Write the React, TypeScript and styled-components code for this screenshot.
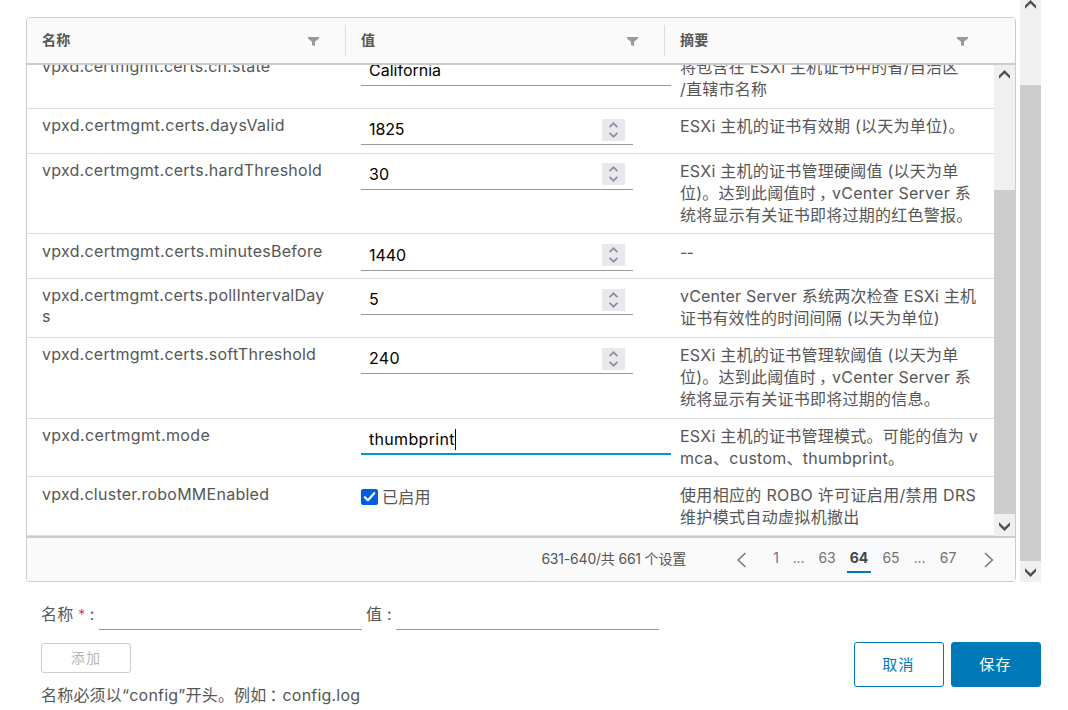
import React from "react";
import styled, { createGlobalStyle, css } from "styled-components";

const GlobalStyle = createGlobalStyle`
  * { box-sizing: border-box; }
  body {
    margin: 0;
    background: #fff;
    color: #565656;
    font-family: Inter, "Noto Sans CJK SC", sans-serif;
    font-size: 16px;
    letter-spacing: 0.25px;
    overflow: hidden;
  }
`;

const Page = styled.main`
  width: 1068px;
  height: 710px;
  display: flex;
  flex-direction: column;
`;

const ScrollArea = styled.section`
  display: flex;
  height: 582px;
  padding-left: 26px;
`;

const Grid = styled.div`
  width: 990px;
  height: 565px;
  margin-top: 17px;
  margin-right: 4px;
  border: 1px solid #ccc;
  border-radius: 4px;
  display: flex;
  flex-direction: column;
  overflow: hidden;
`;

const HeaderRow = styled.div`
  display: flex;
  align-items: center;
  height: 47px;
  flex: none;
  background: #fafafa;
  border-bottom: 2px solid #ccc;
`;

const HeaderCell = styled.div<{ $last?: boolean }>`
  display: flex;
  align-items: center;
  justify-content: space-between;
  height: 31px;
  width: ${(p) => (p.$last ? "349px" : "319px")};
  padding: 1px ${(p) => (p.$last ? "46px" : "26px")} 0 15px;
  border-right: ${(p) => (p.$last ? "none" : "1px solid #ddd")};
  font-size: 14px;
  font-weight: 600;
  line-height: 20px;

  span { margin-top: -2px; }
`;

const Body = styled.div`
  display: flex;
  height: 471px;
  flex: none;
`;

const Rows = styled.div`
  width: 967px;
  overflow: hidden;
  display: flex;
  flex-direction: column;

  > :first-child { margin-top: -15px; }
`;

const Row = styled.div<{ $height: number; $shift?: number }>`
  display: flex;
  flex: none;
  height: ${(p) => p.$height}px;
  padding-top: ${(p) => p.$shift ?? 0}px;
  border-bottom: 1px solid #ddd;
`;

const NameCell = styled.div<{ $spacing?: number }>`
  width: 319px;
  padding: 6px 10px 0 15px;
  line-height: 21px;
  white-space: nowrap;
  letter-spacing: ${(p) => p.$spacing ?? 0.25}px;
`;

const ValueCell = styled.div`
  width: 319px;
  padding: 7px 0 0 15px;
`;

const SummaryCell = styled.div<{ $spacing?: number }>`
  width: 329px;
  padding: 6px 0 0 15px;
  line-height: 22px;
  white-space: nowrap;
  letter-spacing: ${(p) => p.$spacing ?? 0.25}px;
`;

const Field = styled.div<{ $numeric?: boolean; $focused?: boolean; $spacing?: number }>`
  display: flex;
  align-items: center;
  justify-content: space-between;
  width: ${(p) => (p.$numeric ? 272 : 310)}px;
  height: 29px;
  padding: 0 8px 2px;
  color: #000;
  letter-spacing: ${(p) => p.$spacing ?? 0}px;
  border-bottom: 1px solid #999;
  ${(p) => p.$focused && css`border-bottom: 2px solid #0095d3;`}
`;

const Typed = styled.span`
  display: flex;
  align-items: center;
  height: 24px;
`;

const Caret = styled.i`
  width: 1px;
  height: 21px;
  margin-top: 1px;
  background: #000;
`;

const SpinBox = styled.span<{ $raised?: boolean }>`
  display: flex;
  width: 23px;
  height: 22px;
  margin-top: ${(p) => (p.$raised ? 0 : 2)}px;
  background: #e9e9ed;
`;

const CheckLabel = styled.div`
  display: flex;
  align-items: center;
  gap: 4px;
  height: 23px;
`;

const CheckMark = styled.span`
  display: flex;
  width: 17px;
  height: 16px;
  border-radius: 2px;
  background: #0060df;
`;

const CheckText = styled.span`
  margin-top: -2px;
`;

const Track = styled.div`
  display: flex;
  flex-direction: column;
  flex: none;
  width: 21px;
  height: 100%;
  background: #f0f0f0;
`;

const TrackEnd = styled.span<{ $height: number; $arrowTop: number }>`
  display: flex;
  justify-content: center;
  align-items: flex-start;
  height: ${(p) => p.$height}px;
  padding-top: ${(p) => p.$arrowTop}px;
`;

const Thumb = styled.span`
  flex: 1;
  background: #cdcdcd;
`;

const Footer = styled.footer`
  display: flex;
  align-items: center;
  justify-content: flex-end;
  flex: 1;
  padding-right: 18px;
  background: #fafafa;
  border-top: 2px solid #ccc;
  font-size: 14px;
  letter-spacing: -0.15px;
`;

const Total = styled.span`
  margin-right: 48px;
  margin-top: -3px;
  letter-spacing: -0.2px;
`;

const Pager = styled.nav`
  display: flex;
  align-items: center;
`;

const PageItem = styled.span<{ $width?: number; $active?: boolean }>`
  display: flex;
  justify-content: center;
  width: ${(p) => p.$width ?? 24}px;
  height: 28px;
  margin: -1px ${(p) => (p.$width ? 0 : 4)}px 0;
  line-height: 26px;
  color: #737373;
  ${(p) =>
    p.$active &&
    css`
      color: #454545;
      font-weight: 700;
      border-bottom: 2px solid #0079b8;
    `}
`;

const PagerArrow = styled.svg<{ $next?: boolean }>`
  width: 16px;
  height: 16px;
  margin: ${(p) => (p.$next ? "0 0 0 17px" : "0 16px 0 0")};
`;

const Bottom = styled.section`
  display: flex;
  justify-content: space-between;
  padding: 18px 27px 0 41px;
`;

const AddForm = styled.div`
  display: flex;
  flex-direction: column;
  align-items: flex-start;
`;

const FormLine = styled.div`
  display: flex;
  align-items: center;
  height: 30px;
`;

const FormLabel = styled.label<{ $width: number }>`
  width: ${(p) => p.$width}px;
  margin-top: -5px;
  white-space: pre;
`;

const Required = styled.span`
  color: #e0452c;
  font-size: 14px;
  letter-spacing: -0.4px;
`;

const Blank = styled.span`
  width: 263px;
  height: 30px;
  margin-right: 4px;
  border-bottom: 1px solid #999;
`;

const Button = styled.button<{ $kind: "add" | "cancel" | "save" }>`
  width: 90px;
  height: 45px;
  padding: 0 1px 2px 0;
  border: 1px solid #0079b8;
  border-radius: 3px;
  background: #fff;
  color: #0079b8;
  font-family: inherit;
  font-size: 15px;
  letter-spacing: 1.2px;
  ${(p) => p.$kind === "save" && css`background: #0079b8; color: #fff;`}
  ${(p) =>
    p.$kind === "add" &&
    css`
      height: 30px;
      margin-top: 13px;
      padding-right: 0;
      border-color: #ccc;
      color: #b5b5b5;
      font-size: 14px;
    `}
`;

const Hint = styled.p`
  margin: 11px 0 0;
  line-height: 22px;
  white-space: nowrap;
  letter-spacing: 0.2px;
`;

const Actions = styled.div`
  display: flex;
  gap: 7px;
  padding-top: 42px;
`;

const MidPunct = styled.span`
  margin: 0 5px 0 3px;
  font-feature-settings: "halt";
  letter-spacing: 0;
`;

const Filter = () => (
  <svg width="11" height="9" viewBox="0 0 11 9">
    <path d="M0 0H11V1.4L7 4.8V9L4 8.2V4.8L0 1.4Z" fill="#999" />
  </svg>
);

const Spinner = ({ raised }: { raised?: boolean }) => (
  <SpinBox $raised={raised}>
    <svg width="23" height="22" viewBox="0 0 23 22" fill="none" stroke="#8f8f9d" strokeWidth="1.8">
      <path d="M7.5 8.2L11.5 4.3L15.5 8.2M7.5 13.8L11.5 17.7L15.5 13.8" />
    </svg>
  </SpinBox>
);

const Arrow = ({ down }: { down?: boolean }) => (
  <svg width="11" height="9" viewBox="0 0 11 9">
    <path
      d={down ? "M5.5 9L0 3.5V0.2L5.5 5.4L11 0.2V3.5Z" : "M5.5 0L0 5.5V8.8L5.5 3.6L11 8.8V5.5Z"}
      fill="#505050"
    />
  </svg>
);

type Setting = {
  name: string[];
  nameSpacing?: number;
  height: number;
  shift?: number;
  value: React.ReactNode;
  summary: React.ReactNode[];
  summarySpacing?: number;
};

const numberField = (value: string, spacing = 0, raised = false) => (
  <Field $numeric $spacing={spacing}>
    {value}
    <Spinner raised={raised} />
  </Field>
);

const settings: Setting[] = [
  {
    name: ["vpxd.certmgmt.certs.cn.state"],
    nameSpacing: 0.22,
    height: 59,
    value: <Field>California</Field>,
    summary: ["将包含在 ESXi 主机证书中的省/自治区", "/直辖市名称"],
  },
  {
    name: ["vpxd.certmgmt.certs.daysValid"],
    nameSpacing: 0.31,
    height: 45,
    value: numberField("1825", -0.1),
    summary: ["ESXi 主机的证书有效期 (以天为单位)。"],
  },
  {
    name: ["vpxd.certmgmt.certs.hardThreshold"],
    height: 80,
    value: numberField("30", 0.2, true),
    summary: [
      "ESXi 主机的证书管理硬阈值 (以天为单",
      <>位)。达到此阈值时<MidPunct>，</MidPunct>vCenter Server 系</>,
      "统将显示有关证书即将过期的红色警报。",
    ],
  },
  {
    name: ["vpxd.certmgmt.certs.minutesBefore"],
    nameSpacing: 0.28,
    height: 45,
    shift: 1,
    value: numberField("1440", -0.05, true),
    summary: ["--"],
    summarySpacing: -0.9,
  },
  {
    name: ["vpxd.certmgmt.certs.pollIntervalDay", "s"],
    nameSpacing: 0.23,
    height: 59,
    value: numberField("5"),
    summary: ["vCenter Server 系统两次检查 ESXi 主机", "证书有效性的时间间隔 (以天为单位)"],
    summarySpacing: 0.2,
  },
  {
    name: ["vpxd.certmgmt.certs.softThreshold"],
    height: 81,
    value: numberField("240", 0.3),
    summary: [
      "ESXi 主机的证书管理软阈值 (以天为单",
      <>位)。达到此阈值时<MidPunct>，</MidPunct>vCenter Server 系</>,
      "统将显示有关证书即将过期的信息。",
    ],
  },
  {
    name: ["vpxd.certmgmt.mode"],
    nameSpacing: 0.36,
    height: 58,
    value: (
      <Field $focused $spacing={0.32}>
        <Typed>
          thumbprint
          <Caret />
        </Typed>
      </Field>
    ),
    summary: ["ESXi 主机的证书管理模式。可能的值为 v", "mca、custom、thumbprint。"],
  },
  {
    name: ["vpxd.cluster.roboMMEnabled"],
    height: 59,
    shift: 1,
    value: (
      <CheckLabel>
        <CheckMark>
          <svg width="17" height="16" viewBox="0 0 17 16" fill="none" stroke="#fff" strokeWidth="2.2">
            <path d="M3.8 8.2L7 11.3L13.2 4.2" strokeLinecap="round" strokeLinejoin="round" />
          </svg>
        </CheckMark>
        <CheckText>已启用</CheckText>
      </CheckLabel>
    ),
    summary: ["使用相应的 ROBO 许可证启用/禁用 DRS", "维护模式自动虚拟机撤出"],
    summarySpacing: 0.33,
  },
];

export default function App() {
  return (
    <Page>
      <GlobalStyle />
      <ScrollArea>
        <Grid>
          <HeaderRow>
            <HeaderCell><span>名称</span><Filter /></HeaderCell>
            <HeaderCell><span>值</span><Filter /></HeaderCell>
            <HeaderCell $last><span>摘要</span><Filter /></HeaderCell>
          </HeaderRow>
          <Body>
            <Rows>
              {settings.map((s) => (
                <Row key={s.name[0]} $height={s.height} $shift={s.shift}>
                  <NameCell $spacing={s.nameSpacing}>{s.name.map((n) => <div key={n}>{n}</div>)}</NameCell>
                  <ValueCell>{s.value}</ValueCell>
                  <SummaryCell $spacing={s.summarySpacing}>
                    {s.summary.map((line, i) => <div key={i}>{line}</div>)}
                  </SummaryCell>
                </Row>
              ))}
            </Rows>
            <Track>
              <TrackEnd $height={125} $arrowTop={5}><Arrow /></TrackEnd>
              <Thumb />
              <TrackEnd $height={22} $arrowTop={8}><Arrow down /></TrackEnd>
            </Track>
          </Body>
          <Footer>
            <Total>631-640/共 661 个设置</Total>
            <Pager>
              <PagerArrow viewBox="0 0 16 16" fill="none" stroke="#737373" strokeWidth="1.4">
                <path d="M11.5 1L4 8L11.5 15" />
              </PagerArrow>
              <PageItem $width={20}>1</PageItem>
              <PageItem $width={25}>...</PageItem>
              <PageItem>63</PageItem>
              <PageItem $active>64</PageItem>
              <PageItem>65</PageItem>
              <PageItem $width={25}>...</PageItem>
              <PageItem>67</PageItem>
              <PagerArrow $next viewBox="0 0 16 16" fill="none" stroke="#737373" strokeWidth="1.4">
                <path d="M4 1L11.5 8L4 15" />
              </PagerArrow>
            </Pager>
          </Footer>
        </Grid>
        <Track>
          <TrackEnd $height={85} $arrowTop={0}><Arrow /></TrackEnd>
          <Thumb />
          <TrackEnd $height={21} $arrowTop={7}><Arrow down /></TrackEnd>
        </Track>
      </ScrollArea>
      <Bottom>
        <AddForm>
          <FormLine>
            <FormLabel $width={58}>名称 <Required>*</Required> :</FormLabel>
            <Blank />
            <FormLabel $width={30}>值 :</FormLabel>
            <Blank />
          </FormLine>
          <Button $kind="add" disabled>添加</Button>
          <Hint>名称必须以“config”开头。例如<MidPunct>：</MidPunct>config.log</Hint>
        </AddForm>
        <Actions>
          <Button $kind="cancel">取消</Button>
          <Button $kind="save">保存</Button>
        </Actions>
      </Bottom>
    </Page>
  );
}
